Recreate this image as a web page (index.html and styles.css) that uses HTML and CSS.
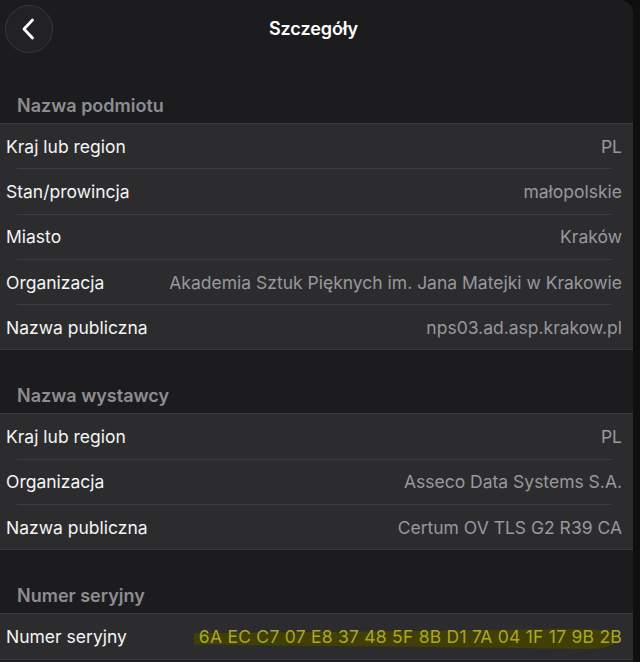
FILE: index.html
```html
<!DOCTYPE html>
<html lang="pl">
<head>
<meta charset="utf-8">
<title>Szczegóły</title>
<link rel="stylesheet" href="styles.css">
</head>
<body>
<div class="screen">
  <main class="sheet">
    <header class="nav">
      <button class="back" aria-label="Wstecz">
        <svg width="14" height="22" viewBox="0 0 14 22"><path d="M11.5 2 L3 11 L11.5 20" fill="none" stroke="#fff" stroke-width="2.8" stroke-linecap="round" stroke-linejoin="round"/></svg>
      </button>
      <h1 class="title">Szczegóły</h1>
      <span></span>
    </header>

    <section class="section first">
      <h2 class="section-title">Nazwa podmiotu</h2>
      <div class="group">
        <div class="row"><span class="label">Kraj lub region</span><span class="value">PL</span></div>
        <div class="row"><span class="label">Stan/prowincja</span><span class="value">małopolskie</span></div>
        <div class="row"><span class="label">Miasto</span><span class="value">Kraków</span></div>
        <div class="row"><span class="label">Organizacja</span><span class="value">Akademia Sztuk Pięknych im. Jana Matejki w Krakowie</span></div>
        <div class="row"><span class="label">Nazwa publiczna</span><span class="value">nps03.ad.asp.krakow.pl</span></div>
      </div>
    </section>

    <section class="section">
      <h2 class="section-title">Nazwa wystawcy</h2>
      <div class="group">
        <div class="row"><span class="label">Kraj lub region</span><span class="value">PL</span></div>
        <div class="row"><span class="label">Organizacja</span><span class="value">Asseco Data Systems S.A.</span></div>
        <div class="row"><span class="label">Nazwa publiczna</span><span class="value">Certum OV TLS G2 R39 CA</span></div>
      </div>
    </section>

    <section class="section">
      <h2 class="section-title">Numer seryjny</h2>
      <div class="group">
        <div class="row marked">
          <svg class="marker" width="633" height="44" viewBox="0 0 633 44" aria-hidden="true">
            <path d="M194 19 L380 17.5 L560 15 Q612 14 619 22 Q618 34 592 35 L420 33 L194 30.5 Z" fill="#403f08"/>
          </svg>
          <span class="label">Numer seryjny</span><span class="value serial">6A EC C7 07 E8 37 48 5F 8B D1 7A 04 1F 17 9B 2B</span>
        </div>
      </div>
    </section>
  </main>
  <div class="edge"></div>
</div>
</body>
</html>
```

FILE: styles.css
```css
* { box-sizing: border-box; }

html, body {
  margin: 0;
  height: 100%;
  background: #0d0d0d;
}

body {
  font-family: Inter, "Noto Sans", "Liberation Sans", sans-serif;
  color: #fff;
  overflow: hidden;
}

.screen {
  display: flex;
  height: 662px;
}

.sheet {
  width: 633px;
  height: 662px;
  background: #1c1c1e;
  border-top-right-radius: 13px;
  overflow: hidden;
}

.edge {
  flex: 1;
  background: #0f0f0f;
}

/* navigation bar */
.nav {
  display: grid;
  grid-template-columns: 48px 1fr 48px;
  align-items: center;
  padding: 3px 5px 0;
  height: 54px;
}

.back {
  width: 48px;
  height: 48px;
  border-radius: 50%;
  border: 1px solid #38383b;
  background: #222224;
  display: flex;
  align-items: center;
  justify-content: center;
  padding: 0 2px 0 0;
  margin: 0;
}

.title {
  margin: 0;
  text-align: center;
  font-size: 18px;
  font-weight: 600;
  letter-spacing: -0.1px;
  padding-right: 6px;
}

/* grouped list */
.section { margin-top: 35px; }
.section.first { margin-top: 41px; }

.section-title {
  margin: 0 0 6px;
  padding: 0 17px;
  font-size: 18px;
  line-height: 22px;
  font-weight: 600;
  color: #8d8d92;
}

.group {
  background: #2c2c2e;
  border-top: 1px solid #3a3a3c;
  border-bottom: 1px solid #3a3a3c;
}

.row {
  position: relative;
  display: flex;
  align-items: center;
  justify-content: space-between;
  gap: 16px;
  height: 44.3px;
  padding: 0 11px 0 6px;
  font-size: 17.5px;
}

.row + .row::before {
  content: "";
  position: absolute;
  top: -1px;
  left: 17px;
  right: 21px;
  height: 1px;
  background: #3d3d40;
}

.row + .row { margin-top: 1px; }

.label {
  color: #f4f4f5;
  white-space: nowrap;
}

.value {
  color: #98989e;
  white-space: nowrap;
  position: relative;
}

.marker {
  position: absolute;
  left: 0;
  top: 0;
}

.label, .serial { position: relative; }

.serial {
  color: #a9a823;
  letter-spacing: 0.24px;
}
```
